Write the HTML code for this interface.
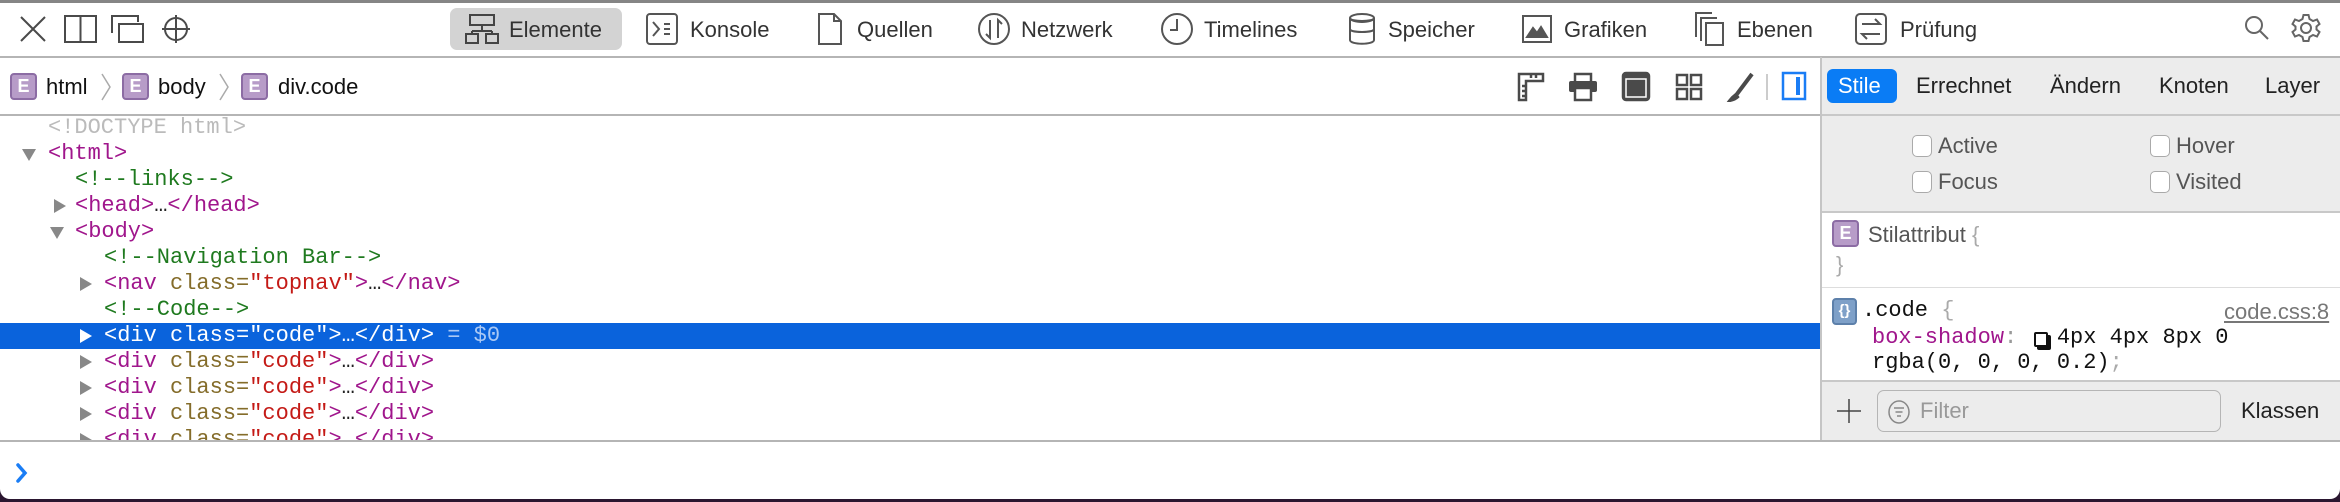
<!DOCTYPE html>
<html><head><meta charset="utf-8">
<style>
*{margin:0;padding:0;box-sizing:border-box}
body{width:2340px;height:502px;background:#2a1630;overflow:hidden;position:relative;font-family:"Liberation Sans",sans-serif}
#win{position:absolute;left:0;top:0;width:2340px;height:499px;background:#fff;border-radius:0 0 10px 10px;overflow:hidden}
.a{position:absolute}
.t{position:absolute;font-size:22px;color:#333;line-height:24px;white-space:nowrap}
svg{position:absolute}
.row{position:absolute;left:0;width:1821px;height:26px;line-height:26px;font-family:"Liberation Mono",monospace;font-size:22px;white-space:pre;color:#a0168c}
.g{color:#1f7a1f}.n{color:#846c2a}.v{color:#c41a16}.k{color:#222}
.tri{position:absolute;width:0;height:0;border-top:7px solid transparent;border-bottom:7px solid transparent;border-left:12px solid #888;top:6px}
.trd{position:absolute;width:0;height:0;border-left:7px solid transparent;border-right:7px solid transparent;border-top:12px solid #888;top:8px}
.E{position:absolute;width:27px;height:27px;background:#b79cc8;border:2px solid #8c6ca4;border-radius:4px;color:#fff;font-weight:bold;font-size:18px;line-height:23px;text-align:center}
.cb{position:absolute;width:20px;height:22px;border:1.5px solid #aaa;border-radius:5px;background:#fff}
</style></head><body>
<div id="win">
<div class="a" style="left:0;top:0;width:2340px;height:3px;background:#858585"></div>
<!-- toolbar -->
<svg style="left:18px;top:12px" width="180" height="34" viewBox="0 0 180 34" fill="none" stroke="#4a4a4a" stroke-width="2">
<path d="M3 5 L27 29 M27 5 L3 29"/>
<rect x="47" y="4" width="31" height="26"/><path d="M62.5 4 V30"/>
<path d="M94 21 V4 H120 V10"/><rect x="101" y="12" width="24" height="18"/>
<circle cx="158" cy="17" r="11"/><path d="M158 3 V31 M144 17 H172"/>
</svg>
<div class="a" style="left:450px;top:8px;width:172px;height:42px;background:#d3d3d3;border-radius:7px"></div>
<svg style="left:464px;top:13px" width="36" height="32" viewBox="0 0 36 32" fill="none" stroke="#444" stroke-width="2"><rect x="6" y="2" width="24" height="10"/><path d="M18 12 V18 M8 18 H28 M8 18 V21 M28 18 V21"/><rect x="2" y="21" width="12" height="9"/><rect x="22" y="21" width="12" height="9"/></svg>
<div class="t" style="left:509px;top:18px">Elemente</div>
<svg style="left:645px;top:12px" width="34" height="34" viewBox="0 0 34 34" fill="none" stroke="#555" stroke-width="2"><rect x="2" y="2" width="30" height="30" rx="3"/><path d="M8 10 L14 17 L8 24 M19 12 H25 M19 17 H25 M19 22 H25"/></svg>
<div class="t" style="left:690px;top:18px">Konsole</div>
<svg style="left:816px;top:12px" width="28" height="34" viewBox="0 0 28 34" fill="none" stroke="#555" stroke-width="2"><path d="M3 2 H18 L25 9 V32 H3 Z M18 2 V9 H25"/></svg>
<div class="t" style="left:857px;top:18px">Quellen</div>
<svg style="left:977px;top:12px" width="34" height="34" viewBox="0 0 34 34" fill="none" stroke="#555" stroke-width="2"><circle cx="17" cy="17" r="15"/><path d="M13 8 V26 L9 22 M21 26 V8 L25 12"/></svg>
<div class="t" style="left:1021px;top:18px">Netzwerk</div>
<svg style="left:1160px;top:12px" width="34" height="34" viewBox="0 0 34 34" fill="none" stroke="#555" stroke-width="2"><circle cx="17" cy="17" r="15"/><path d="M17 7 V18 H10"/></svg>
<div class="t" style="left:1204px;top:18px">Timelines</div>
<svg style="left:1346px;top:12px" width="32" height="34" viewBox="0 0 32 34" fill="none" stroke="#555" stroke-width="2"><ellipse cx="16" cy="6" rx="12" ry="4"/><path d="M4 6 C4 10 28 10 28 6 M4 6 V28 C4 33 28 33 28 28 V6 M4 17 C4 21 28 21 28 17"/></svg>
<div class="t" style="left:1388px;top:18px">Speicher</div>
<svg style="left:1521px;top:14px" width="32" height="30" viewBox="0 0 32 30" fill="none" stroke="#555" stroke-width="2"><rect x="2" y="2" width="28" height="26"/><path d="M6 23 L12 14 L16 19 L20 13 L26 23 Z" fill="#555"/></svg>
<div class="t" style="left:1564px;top:18px">Grafiken</div>
<svg style="left:1694px;top:11px" width="32" height="36" viewBox="0 0 32 36" fill="none" stroke="#555" stroke-width="2"><path d="M2 26 V2 H18 M7 30 V7 H23"/><rect x="12" y="12" width="17" height="22"/></svg>
<div class="t" style="left:1737px;top:18px">Ebenen</div>
<svg style="left:1854px;top:12px" width="34" height="34" viewBox="0 0 34 34" fill="none" stroke="#555" stroke-width="2"><rect x="2" y="2" width="30" height="30" rx="4"/><path d="M8 12 H26 L21 7 M26 22 H8 L13 27"/></svg>
<div class="t" style="left:1900px;top:18px">Prüfung</div>
<svg style="left:2243px;top:14px" width="28" height="28" viewBox="0 0 28 28" fill="none" stroke="#666" stroke-width="2"><circle cx="11" cy="11" r="8"/><path d="M17 17 L25 25"/></svg>
<svg style="left:2291px;top:13px" width="30" height="30" viewBox="0 0 30 30" fill="none" stroke="#666" stroke-width="2"><circle cx="15" cy="15" r="5"/><path d="M12.5 2 H17.5 L18.5 6 L22 8 L26 6.5 L28.5 11 L25.5 13.5 V16.5 L28.5 19 L26 23.5 L22 22 L18.5 24 L17.5 28 H12.5 L11.5 24 L8 22 L4 23.5 L1.5 19 L4.5 16.5 V13.5 L1.5 11 L4 6.5 L8 8 L11.5 6 Z"/></svg>
<div class="a" style="left:0;top:56px;width:2340px;height:2px;background:#b5b5b5"></div>
<!-- breadcrumb -->
<div class="E" style="left:10px;top:73px">E</div><div class="t" style="left:46px;top:75px;color:#111">html</div>
<svg style="left:100px;top:72px" width="12" height="30" viewBox="0 0 12 30" fill="none" stroke="#aaa" stroke-width="1.5"><path d="M2 2 L10 15 L2 28"/></svg>
<div class="E" style="left:122px;top:73px">E</div><div class="t" style="left:158px;top:75px;color:#111">body</div>
<svg style="left:218px;top:72px" width="12" height="30" viewBox="0 0 12 30" fill="none" stroke="#aaa" stroke-width="1.5"><path d="M2 2 L10 15 L2 28"/></svg>
<div class="E" style="left:241px;top:73px">E</div><div class="t" style="left:278px;top:75px;color:#111">div.code</div>
<svg style="left:1515px;top:70px" width="300" height="32" viewBox="0 0 300 32" fill="none" stroke="#4a4a4a" stroke-width="2.5">
<path d="M4 30 V4 H28 V11 H11 V30 Z M16 4 V8 M21 4 V8 M11 16 H7 M11 21 H7 M11 26 H7"/>
<path d="M60 11 V4 H76 V11" stroke-width="2.5"/>
<rect x="54" y="11" width="28" height="11" rx="2" fill="#4a4a4a" stroke="none"/>
<rect x="60" y="18" width="16" height="12" fill="#fff" stroke="#4a4a4a" stroke-width="2.5"/>
<rect x="108" y="3" width="26" height="27" rx="3" fill="#4a4a4a"/><rect x="111" y="9" width="20" height="18" fill="#4a4a4a" stroke="#fff" stroke-width="1.5"/>
<rect x="162" y="5" width="10" height="10"/><rect x="176" y="5" width="10" height="10"/><rect x="162" y="19" width="10" height="10"/><rect x="176" y="19" width="10" height="10"/>
<path d="M237 4 L222 24" stroke-width="4"/><path d="M221 24 Q217 27 214 31 Q220 30 223 27 Z" fill="#4a4a4a"/>
<path d="M252 4 V30" stroke="#ccc" stroke-width="2"/>
<rect x="268" y="3" width="22" height="26" stroke="#1a7df5" stroke-width="2.5"/><path d="M283 7 V25" stroke="#1a7df5" stroke-width="4"/>
</svg>
<div class="a" style="left:0;top:114px;width:1821px;height:2px;background:#b5b5b5"></div>
<!-- DOM tree -->
<div class="row" style="top:115px;left:48px;color:#bbb">&lt;!DOCTYPE html&gt;</div>
<div class="row" style="top:141px"><div class="trd" style="left:22px"></div><span style="position:absolute;left:48px">&lt;html&gt;</span></div>
<div class="row g" style="top:167px;left:75px">&lt;!--links--&gt;</div>
<div class="row" style="top:193px"><div class="tri" style="left:54px"></div><span style="position:absolute;left:75px">&lt;head&gt;<span class="k">…</span>&lt;/head&gt;</span></div>
<div class="row" style="top:219px"><div class="trd" style="left:50px"></div><span style="position:absolute;left:75px">&lt;body&gt;</span></div>
<div class="row g" style="top:245px;left:104px">&lt;!--Navigation Bar--&gt;</div>
<div class="row" style="top:271px"><div class="tri" style="left:80px"></div><span style="position:absolute;left:104px">&lt;nav <span class="n">class=</span><span class="v">"topnav"</span>&gt;<span class="k">…</span>&lt;/nav&gt;</span></div>
<div class="row g" style="top:297px;left:104px">&lt;!--Code--&gt;</div>
<div class="row" style="top:323px;background:#0a63dc;color:#fff"><div class="tri" style="left:80px;border-left-color:#fff"></div><span style="position:absolute;left:104px">&lt;div class="code"&gt;…&lt;/div&gt; <span style="color:#a9c8f5">= $0</span></span></div>
<div class="row" style="top:349px"><div class="tri" style="left:80px"></div><span style="position:absolute;left:104px">&lt;div <span class="n">class=</span><span class="v">"code"</span>&gt;<span class="k">…</span>&lt;/div&gt;</span></div>
<div class="row" style="top:375px"><div class="tri" style="left:80px"></div><span style="position:absolute;left:104px">&lt;div <span class="n">class=</span><span class="v">"code"</span>&gt;<span class="k">…</span>&lt;/div&gt;</span></div>
<div class="row" style="top:401px"><div class="tri" style="left:80px"></div><span style="position:absolute;left:104px">&lt;div <span class="n">class=</span><span class="v">"code"</span>&gt;<span class="k">…</span>&lt;/div&gt;</span></div>
<div class="row" style="top:427px;height:14px;overflow:hidden"><div class="tri" style="left:80px"></div><span style="position:absolute;left:104px">&lt;div <span class="n">class=</span><span class="v">"code"</span>&gt;<span class="k">…</span>&lt;/div&gt;</span></div>
<!-- sidebar -->
<div class="a" style="left:1820px;top:57px;width:2px;height:385px;background:#c5c5c5"></div>
<div class="a" style="left:1822px;top:58px;width:518px;height:154px;background:#ececec"></div>
<div class="a" style="left:1822px;top:114px;width:518px;height:2px;background:#c8c8c8"></div>
<div class="a" style="left:1827px;top:69px;width:70px;height:34px;background:#0a7cf5;border-radius:6px"></div>
<div class="t" style="left:1838px;top:74px;color:#fff">Stile</div>
<div class="t" style="left:1916px;top:74px;color:#222">Errechnet</div>
<div class="t" style="left:2050px;top:74px;color:#222">Ändern</div>
<div class="t" style="left:2159px;top:74px;color:#222">Knoten</div>
<div class="t" style="left:2265px;top:74px;color:#222">Layer</div>
<div class="cb" style="left:1912px;top:135px"></div><div class="t" style="left:1938px;top:134px;color:#555">Active</div>
<div class="cb" style="left:2150px;top:135px"></div><div class="t" style="left:2176px;top:134px;color:#555">Hover</div>
<div class="cb" style="left:1912px;top:171px"></div><div class="t" style="left:1938px;top:170px;color:#555">Focus</div>
<div class="cb" style="left:2150px;top:171px"></div><div class="t" style="left:2176px;top:170px;color:#555">Visited</div>
<div class="a" style="left:1822px;top:211px;width:518px;height:2px;background:#c8c8c8"></div>
<div class="E" style="left:1832px;top:220px">E</div>
<div class="t" style="left:1868px;top:223px;color:#555">Stilattribut <span style="color:#aaa">{</span></div>
<div class="t" style="left:1836px;top:253px;color:#aaa">}</div>
<div class="a" style="left:1822px;top:287px;width:518px;height:1px;background:#ddd"></div>
<div class="a" style="left:1832px;top:298px;width:25px;height:27px;background:#7ea0c8;border:2px solid #5d80aa;border-radius:4px;color:#fff;font-size:15px;line-height:22px;text-align:center;font-weight:bold">{}</div>
<div class="row" style="left:1862px;top:298px;width:auto;color:#111">.code <span style="color:#aaa">{</span></div>
<div class="t" style="left:2224px;top:300px;color:#777;text-decoration:underline">code.css:8</div>
<div class="row" style="left:1872px;top:325px;width:auto;color:#a0168c">box-shadow<span style="color:#999">:</span>   <span style="color:#111">4px 4px 8px 0</span></div>
<div class="a" style="left:2034px;top:332px;width:14px;height:15px;border:2px solid #111;background:#fff;border-radius:2px;box-shadow:3px 3px 0 #111"></div>
<div class="row" style="left:1872px;top:350px;width:auto;color:#111">rgba(0, 0, 0, 0.2)<span style="color:#aaa">;</span></div>
<div class="a" style="left:1822px;top:380px;width:518px;height:62px;background:#ececec;border-top:2px solid #c8c8c8"></div>
<svg style="left:1836px;top:398px" width="26" height="26" viewBox="0 0 26 26" stroke="#444" stroke-width="1.5"><path d="M13 1 V25 M1 13 H25"/></svg>
<div class="a" style="left:1877px;top:390px;width:344px;height:42px;border:1.5px solid #b5b5b5;border-radius:7px;background:#ececec"></div>
<svg style="left:1887px;top:399px" width="24" height="26" viewBox="0 0 24 26" fill="none" stroke="#888" stroke-width="1.5"><ellipse cx="12" cy="13" rx="10" ry="11"/><path d="M7 9 H17 M8.5 13 H15.5 M10 17 H14"/></svg>
<div class="t" style="left:1920px;top:399px;color:#999">Filter</div>
<div class="t" style="left:2241px;top:399px;color:#222">Klassen</div>
<!-- console -->
<div class="a" style="left:0;top:440px;width:2340px;height:2px;background:#b5b5b5"></div>
<svg style="left:12px;top:460px" width="20" height="26" viewBox="0 0 20 26" fill="none" stroke="#1a7df5" stroke-width="3.5" stroke-linecap="round"><path d="M6 5 L13 13 L6 21"/></svg>
</div>
</body></html>
